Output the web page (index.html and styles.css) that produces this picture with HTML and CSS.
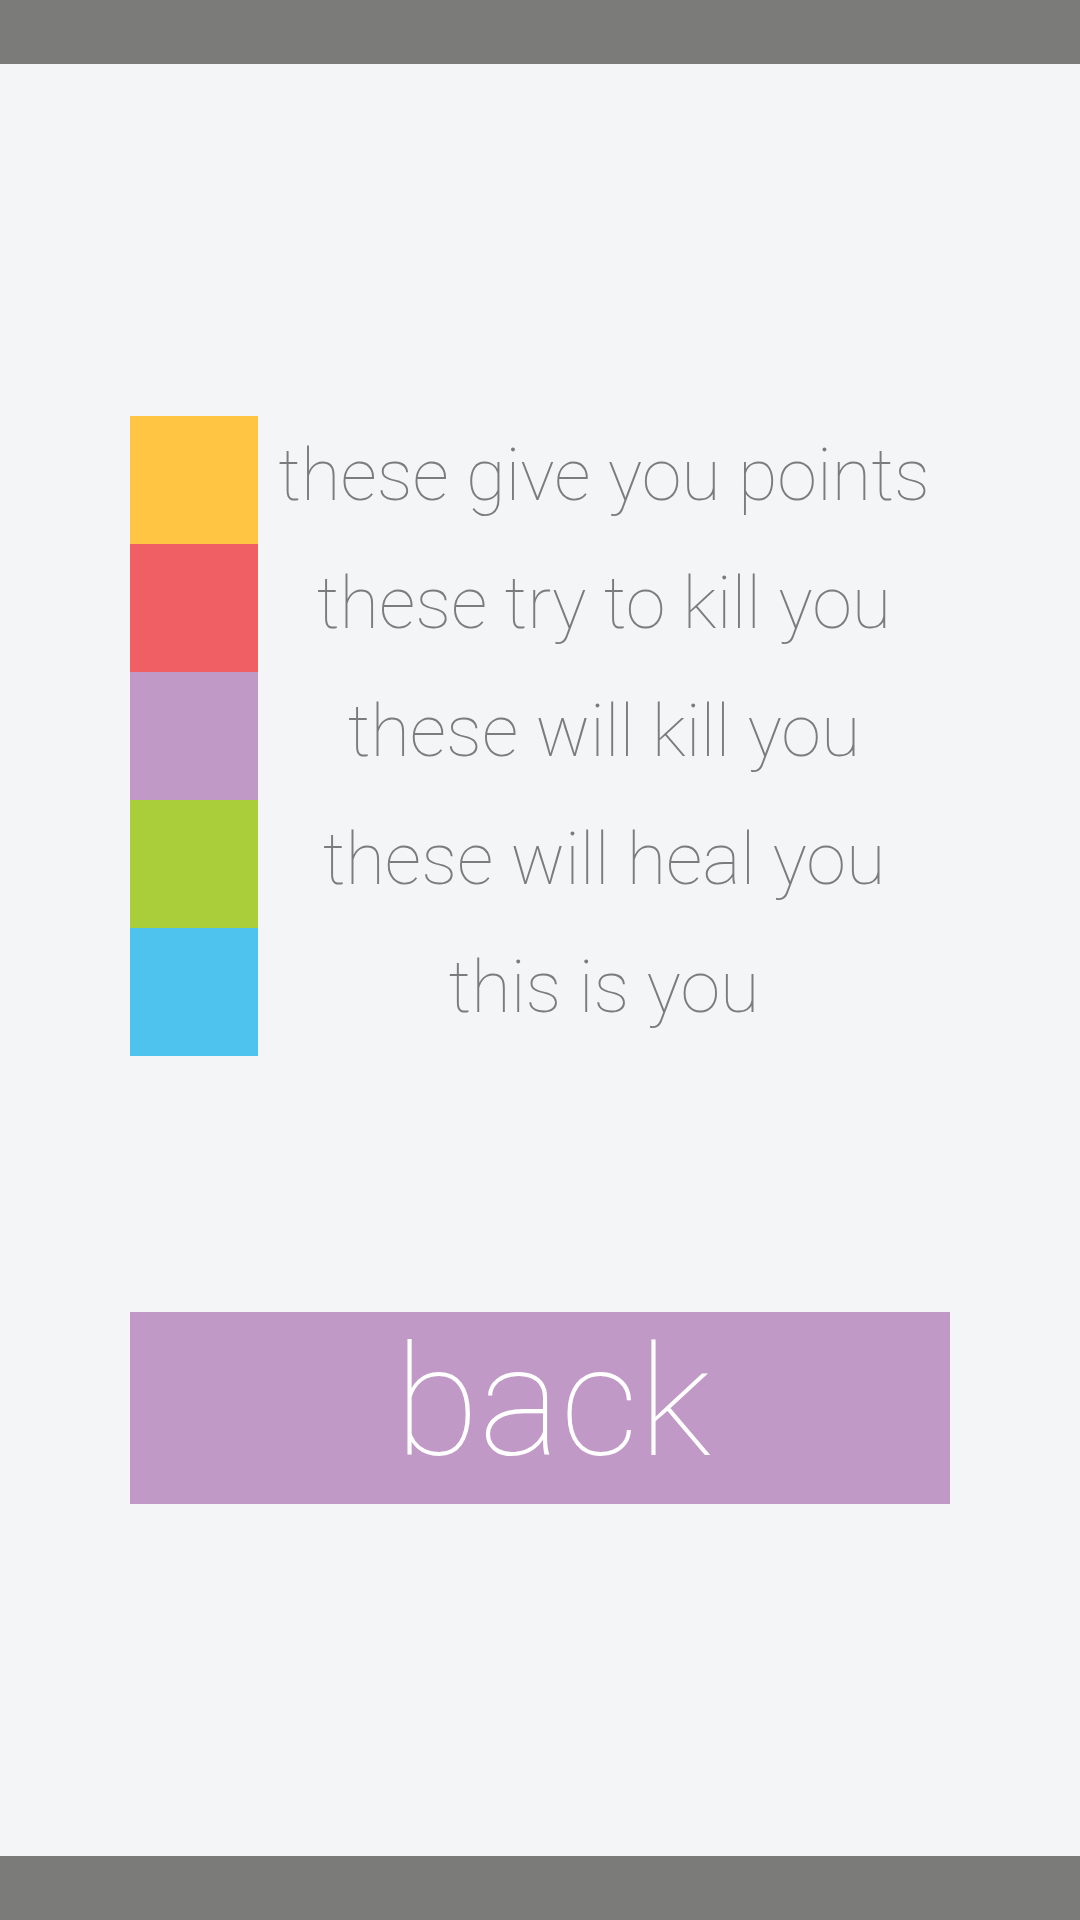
FILE: index.html
```html
<!DOCTYPE html>
<html>
<head>
<meta charset="utf-8">
<link rel="stylesheet" href="styles.css">
</head>
<body>
<div class="screen">
  <div class="sysbar"></div>
  <main class="content">
    <div class="legend">
      <div class="row"><div class="swatch yellow"></div><div class="label">these give you points</div></div>
      <div class="row"><div class="swatch red"></div><div class="label">these try to kill you</div></div>
      <div class="row"><div class="swatch purple"></div><div class="label">these will kill you</div></div>
      <div class="row"><div class="swatch green"></div><div class="label">these will heal you</div></div>
      <div class="row"><div class="swatch blue"></div><div class="label">this is you</div></div>
    </div>
    <div class="back">back</div>
  </main>
  <div class="sysbar"></div>
</div>
</body>
</html>
```

FILE: styles.css
```css
html, body {
  margin: 0;
  padding: 0;
}
body {
  background: #f4f5f7;
  font-family: Roboto, "Liberation Sans", sans-serif;
}
.screen {
  width: 1080px;
  height: 1920px;
  display: flex;
  flex-direction: column;
}
.sysbar {
  height: 64px;
  background: #7b7c7a;
  flex: none;
}
.content {
  flex: 1;
  padding: 352px 130px 0 130px;
  display: flex;
  flex-direction: column;
}
.legend {
  display: flex;
  flex-direction: column;
}
.row {
  display: flex;
  height: 128px;
}
.swatch {
  width: 128px;
  height: 128px;
  flex: none;
}
.yellow { background: #ffc543; }
.red { background: #f05f64; }
.purple { background: #c199c6; }
.green { background: #a9ce39; }
.blue { background: #4dc3ed; }
.label {
  flex: 1;
  text-align: center;
  font-size: 72px;
  font-weight: 100;
  line-height: 120px;
  padding-bottom: 8px;
  color: #7b7c7b;
  white-space: nowrap;
}
.back {
  margin-top: 256px;
  height: 192px;
  box-sizing: border-box;
  background: #c199c6;
  color: #ffffff;
  font-size: 154px;
  font-weight: 100;
  line-height: 182px;
  padding: 0 0 10px 26px;
  text-align: center;
}
```
